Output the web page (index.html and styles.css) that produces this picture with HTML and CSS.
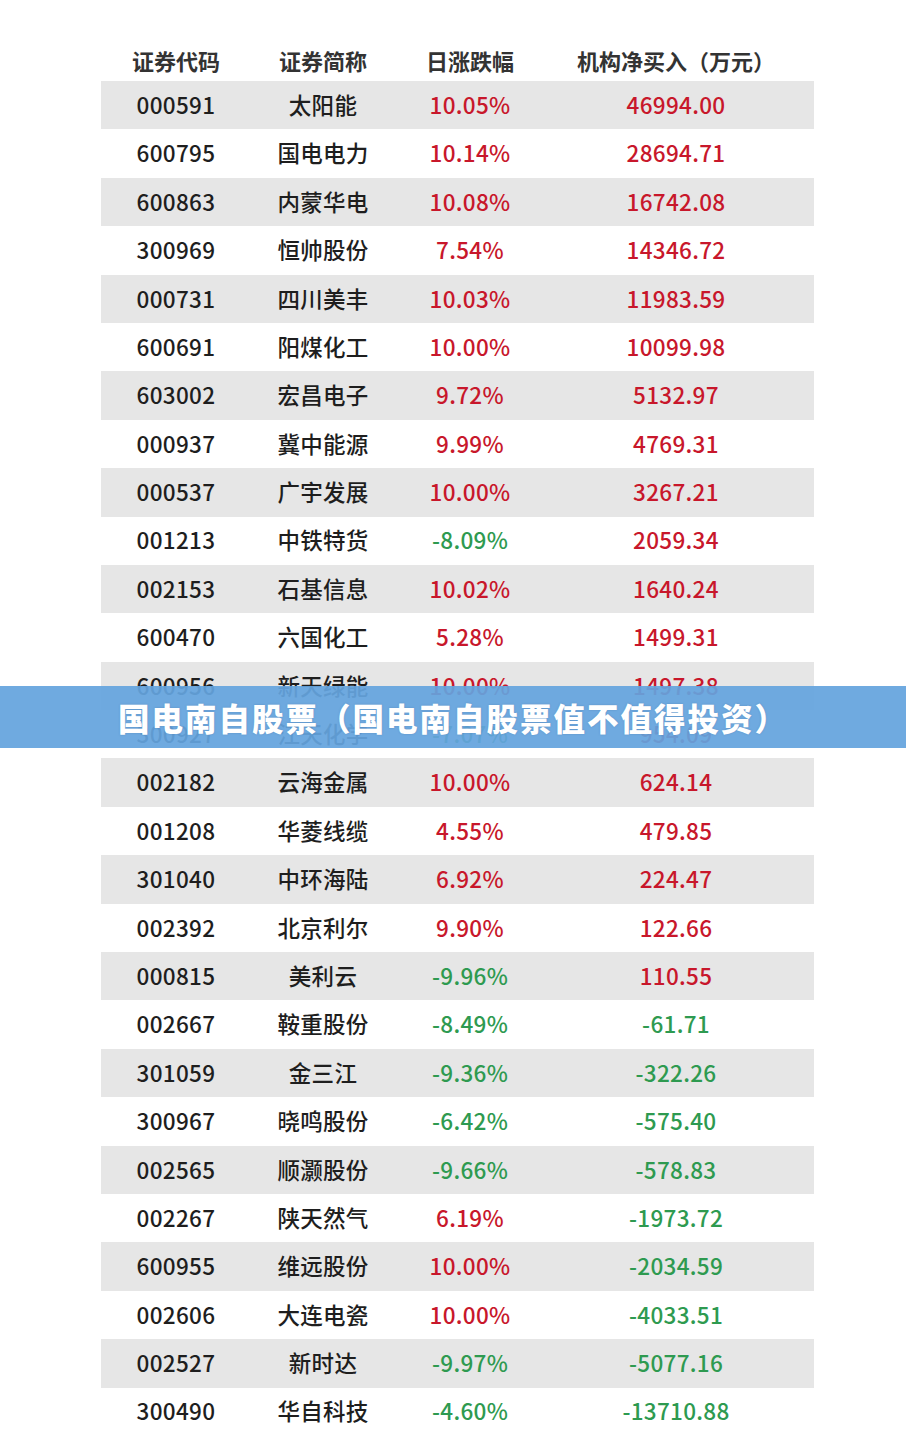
FILE: index.html
```html
<!DOCTYPE html>
<html lang="zh-CN">
<head>
<meta charset="utf-8">
<title>国电南自股票</title>
<link rel="stylesheet" href="styles.css">
</head>
<body>
<div class="page">
  <div class="table">
    <div class="row head">
      <div class="c">证券代码</div><div class="c">证券简称</div><div class="c">日涨跌幅</div><div class="c">机构净买入（万元）</div>
    </div>
    <div class="row alt"><div class="c">000591</div><div class="c">太阳能</div><div class="c up">10.05%</div><div class="c up">46994.00</div></div>
    <div class="row"><div class="c">600795</div><div class="c">国电电力</div><div class="c up">10.14%</div><div class="c up">28694.71</div></div>
    <div class="row alt"><div class="c">600863</div><div class="c">内蒙华电</div><div class="c up">10.08%</div><div class="c up">16742.08</div></div>
    <div class="row"><div class="c">300969</div><div class="c">恒帅股份</div><div class="c up">7.54%</div><div class="c up">14346.72</div></div>
    <div class="row alt"><div class="c">000731</div><div class="c">四川美丰</div><div class="c up">10.03%</div><div class="c up">11983.59</div></div>
    <div class="row"><div class="c">600691</div><div class="c">阳煤化工</div><div class="c up">10.00%</div><div class="c up">10099.98</div></div>
    <div class="row alt"><div class="c">603002</div><div class="c">宏昌电子</div><div class="c up">9.72%</div><div class="c up">5132.97</div></div>
    <div class="row"><div class="c">000937</div><div class="c">冀中能源</div><div class="c up">9.99%</div><div class="c up">4769.31</div></div>
    <div class="row alt"><div class="c">000537</div><div class="c">广宇发展</div><div class="c up">10.00%</div><div class="c up">3267.21</div></div>
    <div class="row"><div class="c">001213</div><div class="c">中铁特货</div><div class="c down">-8.09%</div><div class="c up">2059.34</div></div>
    <div class="row alt"><div class="c">002153</div><div class="c">石基信息</div><div class="c up">10.02%</div><div class="c up">1640.24</div></div>
    <div class="row"><div class="c">600470</div><div class="c">六国化工</div><div class="c up">5.28%</div><div class="c up">1499.31</div></div>
    <div class="row alt"><div class="c">600956</div><div class="c">新天绿能</div><div class="c up">10.00%</div><div class="c up">1497.38</div></div>
    <div class="row"><div class="c">300927</div><div class="c">江天化学</div><div class="c down">-7.07%</div><div class="c up">954.09</div></div>
    <div class="row alt"><div class="c">002182</div><div class="c">云海金属</div><div class="c up">10.00%</div><div class="c up">624.14</div></div>
    <div class="row"><div class="c">001208</div><div class="c">华菱线缆</div><div class="c up">4.55%</div><div class="c up">479.85</div></div>
    <div class="row alt"><div class="c">301040</div><div class="c">中环海陆</div><div class="c up">6.92%</div><div class="c up">224.47</div></div>
    <div class="row"><div class="c">002392</div><div class="c">北京利尔</div><div class="c up">9.90%</div><div class="c up">122.66</div></div>
    <div class="row alt"><div class="c">000815</div><div class="c">美利云</div><div class="c down">-9.96%</div><div class="c up">110.55</div></div>
    <div class="row"><div class="c">002667</div><div class="c">鞍重股份</div><div class="c down">-8.49%</div><div class="c down">-61.71</div></div>
    <div class="row alt"><div class="c">301059</div><div class="c">金三江</div><div class="c down">-9.36%</div><div class="c down">-322.26</div></div>
    <div class="row"><div class="c">300967</div><div class="c">晓鸣股份</div><div class="c down">-6.42%</div><div class="c down">-575.40</div></div>
    <div class="row alt"><div class="c">002565</div><div class="c">顺灏股份</div><div class="c down">-9.66%</div><div class="c down">-578.83</div></div>
    <div class="row"><div class="c">002267</div><div class="c">陕天然气</div><div class="c up">6.19%</div><div class="c down">-1973.72</div></div>
    <div class="row alt"><div class="c">600955</div><div class="c">维远股份</div><div class="c up">10.00%</div><div class="c down">-2034.59</div></div>
    <div class="row"><div class="c">002606</div><div class="c">大连电瓷</div><div class="c up">10.00%</div><div class="c down">-4033.51</div></div>
    <div class="row alt"><div class="c">002527</div><div class="c">新时达</div><div class="c down">-9.97%</div><div class="c down">-5077.16</div></div>
    <div class="row"><div class="c">300490</div><div class="c">华自科技</div><div class="c down">-4.60%</div><div class="c down">-13710.88</div></div>
  </div>
  <div class="banner">国电南自股票（国电南自股票值不值得投资）</div>
</div>
</body>
</html>
```
FILE: styles.css
```css
html, body {
  margin: 0;
  padding: 0;
  background: #ffffff;
}
.page {
  position: relative;
  width: 906px;
  height: 1434px;
  overflow: hidden;
  font-family: "Noto Sans CJK SC", "Noto Sans", sans-serif;
}
.table {
  margin: 39px 0 0 101px;
  width: 713px;
}
.row {
  display: grid;
  grid-template-columns: 150px 144px 150px 262px 1fr;
  height: 48.4px;
  align-items: center;
  color: #1e1e1e;
  font-size: 22.5px;
  font-weight: 500;
  letter-spacing: 0.3px;
  padding-bottom: 2px;
  box-sizing: border-box;
}
.row.head {
  height: 42px;
  font-weight: 700;
  color: #333333;
  font-size: 22px;
  letter-spacing: 0;
  padding-bottom: 0;
}
.row.alt {
  background: #e6e6e6;
}
.c {
  text-align: center;
  white-space: nowrap;
  line-height: 1;
}
.up {
  color: #c8172b;
}
.down {
  color: #2e9a50;
}
.banner {
  position: absolute;
  left: 0;
  top: 686px;
  width: 906px;
  height: 62px;
  background: rgba(100, 164, 222, 0.93);
  color: #ffffff;
  font-weight: 900;
  font-size: 31.5px;
  letter-spacing: 2px;
  line-height: 62px;
  text-align: center;
  white-space: nowrap;
  text-shadow: 0 0 2px rgba(60, 100, 150, 0.4);
}
```
